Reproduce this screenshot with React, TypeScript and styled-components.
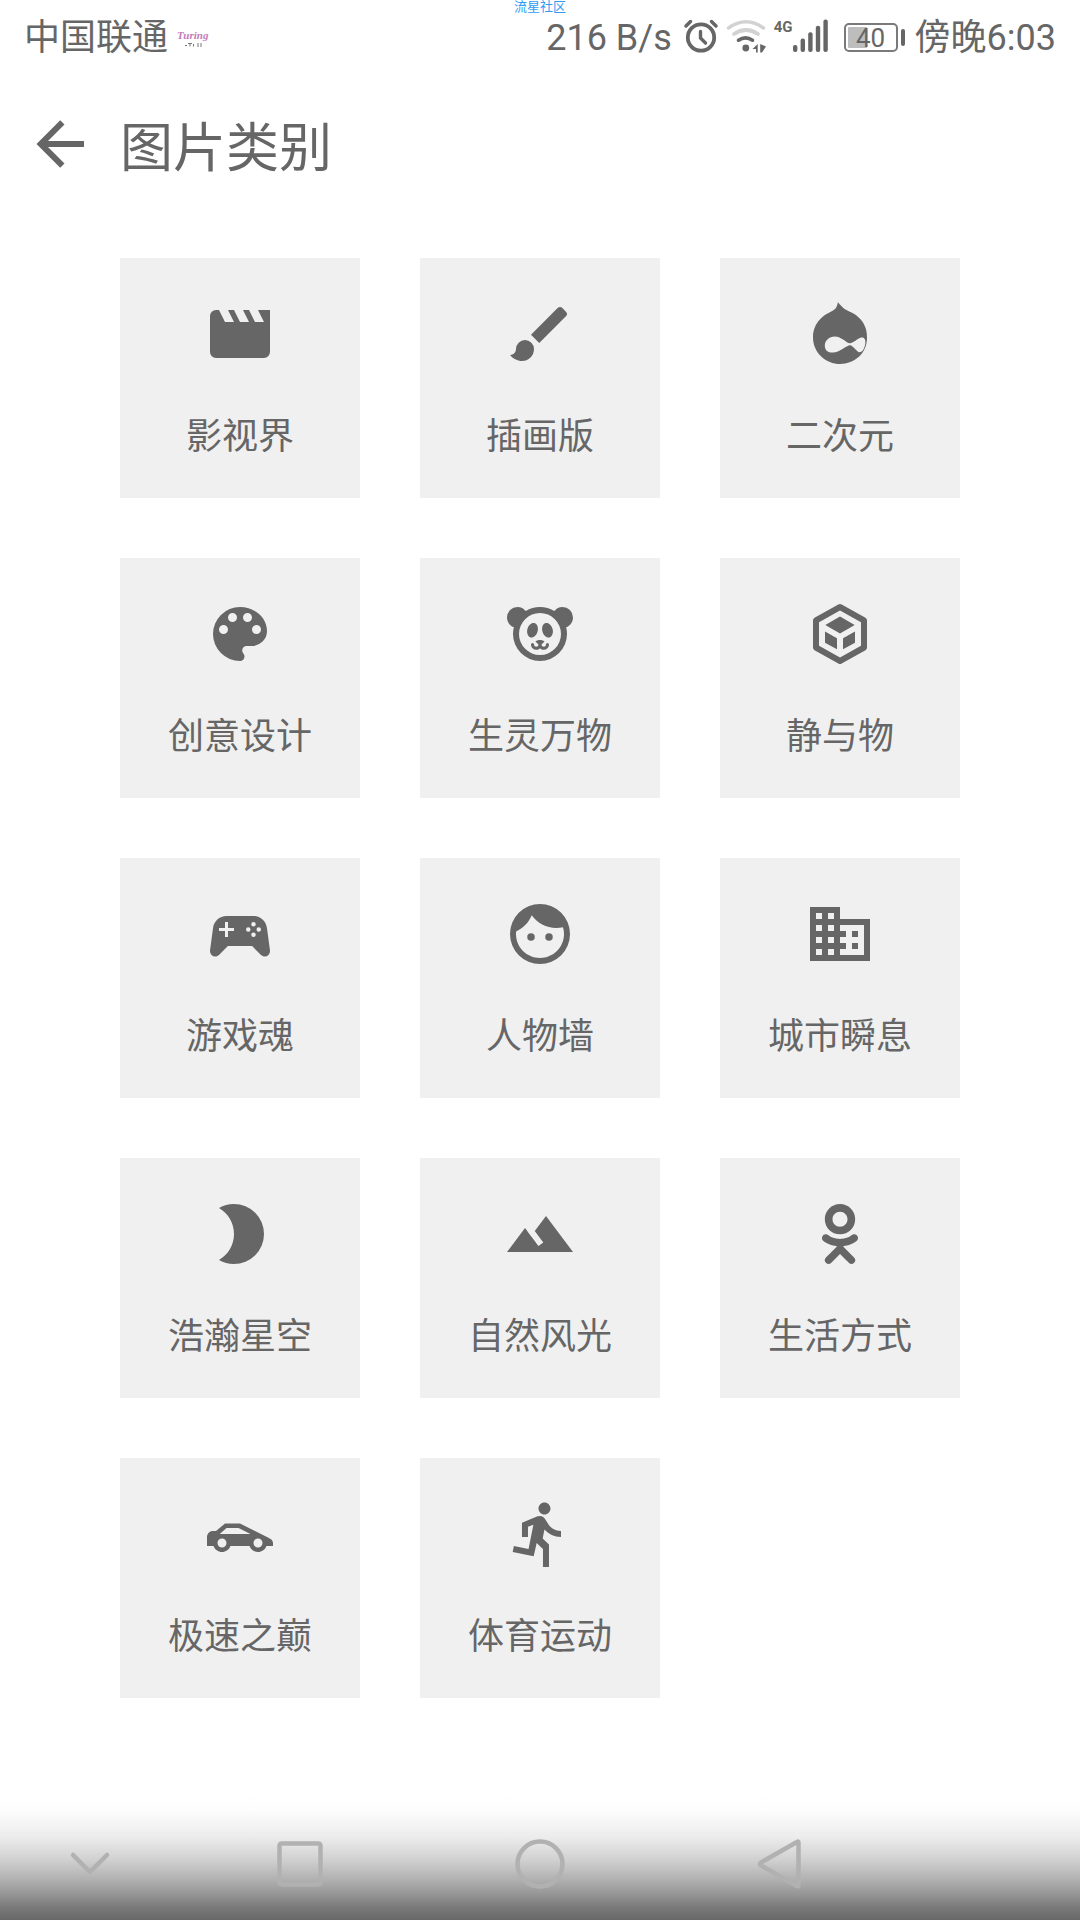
import React from 'react';
import styled, { createGlobalStyle } from 'styled-components';

const ink = '#666666';

const GlobalStyle = createGlobalStyle`
  * { box-sizing: border-box; }
  body {
    margin: 0;
    background: #ffffff;
    color: ${ink};
    font-family: Roboto, 'Noto Sans CJK SC', sans-serif;
  }
`;

const Screen = styled.div`
  display: flex;
  flex-direction: column;
  min-height: 100vh;
`;

const StatusBar = styled.div`
  position: relative;
  display: flex;
  align-items: center;
  justify-content: space-between;
  height: 72px;
  padding: 2px 24px 0;
  font-size: 36px;
  line-height: 48px;
  white-space: nowrap;
`;

const Watermark = styled.span`
  position: absolute;
  top: 0;
  left: 50%;
  transform: translateX(-50%);
  color: #2f9df4;
  font-size: 13px;
  line-height: 13px;
`;

const StatusGroup = styled.div<{ $gap: number }>`
  display: flex;
  align-items: center;
  gap: ${(p) => p.$gap}px;
`;

const StatusText = styled.span<{ $after?: number }>`
  padding-top: 2px;
  margin-right: ${(p) => p.$after ?? 0}px;
`;

const AppMark = styled.span`
  display: flex;
  flex-direction: column;
  align-items: center;
  color: #c47bb8;
  font-family: 'Liberation Serif', serif;
  font-size: 11px;
  font-style: italic;
  font-weight: 700;
  line-height: 16px;
`;

const Network = styled.span`
  display: flex;
  align-items: flex-start;
  height: 36px;
`;

const NetworkType = styled.span`
  font-size: 15px;
  font-weight: 700;
  line-height: 16px;
`;

const Battery = styled.span`
  display: flex;
  align-items: center;
  gap: 3px;
  margin: 0 2px 0 8px;

  &::after {
    content: '';
    width: 4px;
    height: 17px;
    border-radius: 2px;
    background: ${ink};
  }
`;

const BatteryCell = styled.span`
  width: 54px;
  height: 29px;
  padding: 2px;
  border: 2px solid #7a7a7a;
  border-radius: 5px;
  background: linear-gradient(90deg, #bdbdbd 42%, transparent 42%) content-box;
  font-size: 26px;
  line-height: 23px;
  text-align: center;
`;

const Header = styled.header`
  display: flex;
  align-items: center;
  gap: 24px;
  height: 144px;
  padding: 0 24px;
`;

const BackButton = styled.button`
  display: flex;
  padding: 0;
  border: 0;
  background: none;
  color: inherit;
  cursor: pointer;
`;

const Title = styled.h1`
  margin: 0;
  padding-top: 10px;
  font-size: 53px;
  font-weight: 400;
  line-height: 72px;
`;

const Grid = styled.main`
  display: grid;
  grid-template-columns: repeat(3, 1fr);
  gap: 60px;
  padding: 42px 120px 60px;
`;

const Tile = styled.button`
  display: flex;
  flex-direction: column;
  align-items: center;
  gap: 40px;
  aspect-ratio: 1;
  padding: 40px 0 0;
  border: 0;
  background: #f0f0f0;
  color: inherit;
  font: inherit;
  font-size: 36px;
  line-height: 54px;
  cursor: pointer;
`;

const Glyph = styled.svg`
  display: block;
  flex: none;
  width: 72px;
  height: 72px;
  fill: currentColor;
  fill-rule: evenodd;
`;

const NavBar = styled.nav`
  display: grid;
  grid-template-columns: 3fr 4fr 4fr 4fr 3fr;
  align-items: center;
  justify-items: center;
  height: 130px;
  margin-top: auto;
  padding-top: 18px;
  background: linear-gradient(
    #ffffff 0,
    #fdfdfd 20px,
    #ececec 47px,
    #d0d0d0 70px,
    #b0b0b0 90px,
    #949494 105px,
    #7a7a7a 117px,
    #686868 130px
  );
`;

const NavButton = styled.button`
  display: flex;
  padding: 0;
  border: 0;
  background: none;
  cursor: pointer;
`;

const NavGlyph = styled.svg`
  width: 60px;
  height: 60px;
  fill: none;
  stroke: #b1b1b1;
  stroke-width: 4.5;
  stroke-linecap: round;
  stroke-linejoin: round;
`;

const dot = (cx: number, cy: number, r: number) =>
  `M${cx - r},${cy}a${r},${r} 0 1,0 ${2 * r},0a${r},${r} 0 1,0 ${-2 * r},0Z`;

const categories = [
  {
    label: '影视界',
    path: 'M18,4L20,8H17L15,4H13L15,8H12L10,4H8L10,8H7L5,4H4A2,2 0 0,0 2,6V18A2,2 0 0,0 4,20H20A2,2 0 0,0 22,18V4H18Z',
  },
  {
    label: '插画版',
    path: 'M20.71,4.63L19.37,3.29C19,2.9 18.35,2.9 17.96,3.29L9,12.25L11.75,15L20.71,6.04C21.1,5.65 21.1,5 20.71,4.63M7,14A3,3 0 0,0 4,17C4,18.31 2.84,19 2,19C2.92,20.22 4.5,21 6,21A4,4 0 0,0 10,17A3,3 0 0,0 7,14Z',
  },
  {
    label: '二次元',
    path: 'M20.47,14.65C20.47,15.29 20.25,16.36 19.83,17.1C19.4,17.85 19.08,18.06 18.44,18.06C17.7,17.95 16.31,15.82 15.36,15.72C14.18,15.72 11.73,18.17 9.71,18.17C8.54,18.17 8.11,17.95 7.79,17.74C7.15,17.31 6.94,16.67 6.94,15.82C6.94,14.22 8.43,12.84 10.24,12.84C12.59,12.84 14.18,15.18 15.36,15.08C16.31,15.08 18.23,13.16 19.19,13.16C20.15,12.95 20.47,14 20.47,14.65M16.63,5.28C15.57,4.64 14.61,4.32 13.54,3.68C12.9,3.25 12.05,2.3 11.31,1.44C11,2.83 10.78,3.36 10.24,3.79C9.18,4.53 8.64,4.85 7.69,5.28C6.94,5.7 3,8.05 3,13.16C3,18.27 7.37,22 12.05,22C16.85,22 21,18.5 21,13.27C21.21,8.05 17.27,5.7 16.63,5.28Z',
  },
  {
    label: '创意设计',
    path:
      'M12,3A9,9 0 0,0 3,12A9,9 0 0,0 12,21A1.5,1.5 0 0,0 13.5,19.5C13.5,19.11 13.35,18.76 13.11,18.5C12.88,18.23 12.73,17.88 12.73,17.5A1.5,1.5 0 0,1 14.23,16H16A5,5 0 0,0 21,11C21,6.58 16.97,3 12,3Z' +
      dot(17.5, 10.5, 1.5) + dot(14.5, 6.5, 1.5) + dot(9.5, 6.5, 1.5) + dot(6.5, 10.5, 1.5),
  },
  {
    label: '生灵万物',
    path: 'M12,3C13.74,3 15.36,3.5 16.74,4.35C17.38,3.53 18.38,3 19.5,3A3.5,3.5 0 0,1 23,6.5C23,8 22.05,9.28 20.72,9.78C20.9,10.5 21,11.23 21,12A9,9 0 0,1 12,21A9,9 0 0,1 3,12C3,11.23 3.1,10.5 3.28,9.78C1.95,9.28 1,8 1,6.5A3.5,3.5 0 0,1 4.5,3C5.62,3 6.62,3.53 7.26,4.35C8.64,3.5 10.26,3 12,3M12,5A7,7 0 0,0 5,12A7,7 0 0,0 12,19A7,7 0 0,0 19,12A7,7 0 0,0 12,5M16.19,10.3C16.55,11.63 16.08,12.91 15.15,13.16C14.21,13.42 13.17,12.54 12.81,11.2C12.45,9.87 12.92,8.59 13.85,8.34C14.79,8.09 15.83,8.96 16.19,10.3M7.81,10.3C8.17,8.96 9.21,8.09 10.15,8.34C11.08,8.59 11.55,9.87 11.19,11.2C10.83,12.54 9.79,13.42 8.85,13.16C7.92,12.91 7.45,11.63 7.81,10.3M12,14C12.6,14 13.13,14.19 13.5,14.5L12.5,15.5C12.5,15.92 12.84,16.25 13.25,16.25A0.75,0.75 0 0,0 14,15.5A0.5,0.5 0 0,1 14.5,15A0.5,0.5 0 0,1 15,15.5A1.75,1.75 0 0,1 13.25,17.25C12.76,17.25 12.32,17.05 12,16.72C11.68,17.05 11.24,17.25 10.75,17.25A1.75,1.75 0 0,1 9,15.5A0.5,0.5 0 0,1 9.5,15A0.5,0.5 0 0,1 10,15.5A0.75,0.75 0 0,0 10.75,16.25A0.75,0.75 0 0,0 11.5,15.5L10.5,14.5C10.87,14.19 11.4,14 12,14Z',
  },
  {
    label: '静与物',
    path: 'M11.43,2.18Q12,1.8 12.57,2.18L20.5,6.6Q21,6.9 21,7.5V16.5Q21,17.1 20.5,17.4L12.57,21.82Q12,22.2 11.43,21.82L3.5,17.4Q3,17.1 3,16.5V7.5Q3,6.9 3.5,6.6ZM12,4.2L5,8.1V15.9L12,19.8L19,15.9V8.1ZM12,6.2L16.9,9L12,11.8L7.1,9ZM7,11.2L11,13.4V17.1L7,14.9ZM17,11.2V14.9L13,17.1V13.4Z',
  },
  {
    label: '游戏魂',
    path:
      'M7.97,16L5,19C4.67,19.3 4.23,19.5 3.75,19.5A1.75,1.75 0 0,1 2,17.75V17.5L3,10.12C3.21,7.81 5.14,6 7.5,6H16.5C18.86,6 20.79,7.81 21,10.12L22,17.5V17.75A1.75,1.75 0 0,1 20.25,19.5C19.77,19.5 19.33,19.3 19,19L16.03,16H7.97M7,8V10H5V11H7V13H8V11H10V10H8V8H7Z' +
      dot(16.5, 8.75, 0.75) + dot(14.75, 10.5, 0.75) + dot(18.25, 10.5, 0.75) + dot(16.5, 12.25, 0.75),
  },
  {
    label: '人物墙',
    path:
      'M12,2A10,10 0 0,0 2,12A10,10 0 0,0 12,22A10,10 0 0,0 22,12A10,10 0 0,0 12,2M12,20C7.59,20 4,16.41 4,12C4,11.71 4,11.42 4.05,11.14C6.41,10.09 8.28,8.16 9.26,5.77C11.07,8.33 14.05,10 17.42,10C18.2,10 18.95,9.91 19.67,9.74C19.88,10.45 20,11.21 20,12C20,16.41 16.41,20 12,20Z' +
      dot(9, 13, 1.25) + dot(15, 13, 1.25),
  },
  {
    label: '城市瞬息',
    path: 'M18,15H16V17H18M18,11H16V13H18M20,19H12V17H14V15H12V13H14V11H12V9H20M10,7H8V5H10M10,11H8V9H10M10,15H8V13H10M10,19H8V17H10M6,7H4V5H6M6,11H4V9H6M6,15H4V13H6M6,19H4V17H6M12,7V3H2V21H22V7H12Z',
  },
  {
    label: '浩瀚星空',
    path: 'M10,2C8.18,2 6.47,2.5 5,3.35C8,5.08 10,8.3 10,12C10,15.7 8,18.92 5,20.65C6.47,21.5 8.18,22 10,22A10,10 0 0,0 20,12A10,10 0 0,0 10,2Z',
  },
  {
    label: '自然风光',
    path: 'M14,6L10.25,11L13.1,14.8L11.5,16C9.81,13.75 7,10 7,10L1,18H23L14,6Z',
  },
  {
    label: '生活方式',
    path: 'M17.83,12.74C17.55,12.17 16.76,11.69 15.71,12.5C14.28,13.64 12,13.64 12,13.64C12,13.64 9.72,13.64 8.29,12.5C7.24,11.69 6.45,12.17 6.17,12.74C5.67,13.74 6.23,14.23 7.5,15.04C8.59,15.74 10.08,16 11.04,16.1L10.24,16.9C9.1,18.03 8,19.12 7.25,19.88C6.8,20.34 6.8,21.07 7.25,21.5L7.39,21.66C7.84,22.11 8.58,22.11 9.03,21.66L12,18.68C13.15,19.81 14.24,20.9 15,21.66C15.45,22.11 16.18,22.11 16.64,21.66L16.77,21.5C17.23,21.07 17.23,20.34 16.77,19.88L13.79,16.9L13,16.09C13.95,16 15.42,15.73 16.5,15.04C17.77,14.23 18.33,13.74 17.83,12.74M12,4.57C13.38,4.57 14.5,5.69 14.5,7.06C14.5,8.44 13.38,9.55 12,9.55C10.62,9.55 9.5,8.44 9.5,7.06C9.5,5.69 10.62,4.57 12,4.57M12,12.12C14.8,12.12 17.06,9.86 17.06,7.06C17.06,4.27 14.8,2 12,2C9.2,2 6.94,4.27 6.94,7.06C6.94,9.86 9.2,12.12 12,12.12Z',
  },
  {
    label: '极速之巅',
    path:
      'M12,8.5H7L4,11H3C1.89,11 1,11.89 1,13V16H3.17C3.6,17.2 4.73,18 6,18C7.27,18 8.4,17.2 8.82,16H15.17C15.6,17.2 16.73,18 18,18C19.27,18 20.4,17.2 20.82,16H23V15C23,13.89 21.97,13.53 21,13L12,8.5M5.25,12L7.5,10H11.5L15.5,12H5.25Z' +
      dot(6, 15, 1.5) + dot(18, 15, 1.5),
  },
  {
    label: '体育运动',
    path: 'M13.49,5.48C14.59,5.48 15.49,4.58 15.49,3.48C15.49,2.38 14.59,1.48 13.49,1.48C12.39,1.48 11.49,2.38 11.49,3.48C11.49,4.58 12.39,5.48 13.49,5.48M9.89,19.38L10.89,14.98L12.99,16.98V22.98H14.99V15.48L12.89,13.48L13.49,10.48C14.79,11.98 16.79,12.98 18.99,12.98V10.98C17.09,10.98 15.49,9.98 14.69,8.58L13.69,6.98C13.29,6.38 12.69,5.98 11.99,5.98C11.69,5.98 11.49,6.08 11.19,6.08L5.99,8.28V12.98H7.99V9.58L9.79,8.88L8.19,16.98L3.29,15.98L2.89,17.98L9.89,19.38Z',
  },
];

const AlarmIcon = () => (
  <svg width="34" height="36" viewBox="0 0 34 36" fill="none" stroke={ink} strokeLinecap="round">
    <circle cx="17" cy="18.5" r="13.2" strokeWidth="3.8" />
    <path d="M16.5 12.5v6.5l5 5" strokeWidth="3.4" strokeLinejoin="round" />
    <path d="M2 7l4.500-4.500M27.500 2.500L32 7" strokeWidth="3.4" />
  </svg>
);

const WifiIcon = () => (
  <svg width="40" height="36" viewBox="0 0 40 36" fill="none" strokeLinecap="round">
    <path d="M2.500 9Q20-3.500 37.500 9" stroke="#d2d2d2" strokeWidth="3.4" />
    <path d="M8 15Q20 7 32 15" stroke="#d2d2d2" strokeWidth="3.8" />
    <path d="M12.500 21.200Q19.500 16.500 26.500 21.200" stroke={ink} strokeWidth="3.6" />
    <circle cx="19.800" cy="29" r="3.400" fill={ink} />
    <path d="M26.500 30l5.200-5v8.500h-1.700V30zM34.200 25l5.800 2.500-4 6h-1.800z" fill={ink} />
  </svg>
);

const SignalIcon = () => (
  <svg width="35" height="36" viewBox="0 0 35 36" fill={ink}>
    {[0, 1, 2, 3, 4].map((i) => (
      <rect key={i} x={i * 7.6} y={26 - i * 6.4} width="4.4" height={7 + i * 6.4} rx="2" />
    ))}
  </svg>
);

export default function App() {
  return (
    <Screen>
      <GlobalStyle />
      <StatusBar>
        <Watermark>流星社区</Watermark>
        <StatusGroup $gap={9}>
          <StatusText>中国联通</StatusText>
          <AppMark>
            Turing
            <svg width="18" height="4" viewBox="0 0 18 4" stroke="#777" strokeWidth="1">
              <path d="M1 2.500h2M4 .500h4M6 1v2.500M9.500 1v2.500M13 1h2M16 1h2M13 3h2M16 3h2" />
            </svg>
          </AppMark>
        </StatusGroup>
        <StatusGroup $gap={8}>
          <StatusText $after={4}>216 B/s</StatusText>
          <AlarmIcon />
          <WifiIcon />
          <Network>
            <NetworkType>4G</NetworkType>
            <SignalIcon />
          </Network>
          <Battery>
            <BatteryCell>40</BatteryCell>
          </Battery>
          <StatusText>傍晚6:03</StatusText>
        </StatusGroup>
      </StatusBar>
      <Header>
        <BackButton type="button" aria-label="返回">
          <Glyph viewBox="0 0 24 24">
            <path d="M20,11V13H8L13.5,18.5L12.08,19.92L4.16,12L12.08,4.08L13.5,5.5L8,11H20Z" />
          </Glyph>
        </BackButton>
        <Title>图片类别</Title>
      </Header>
      <Grid>
        {categories.map(({ label, path }) => (
          <Tile key={label} type="button">
            <Glyph viewBox="0 0 24 24" aria-hidden="true">
              <path d={path} />
            </Glyph>
            {label}
          </Tile>
        ))}
      </Grid>
      <NavBar>
        <NavButton type="button" aria-label="收起">
          <NavGlyph viewBox="0 0 60 60">
            <path d="M13 21l17 17 17-17" />
          </NavGlyph>
        </NavButton>
        <NavButton type="button" aria-label="最近任务">
          <NavGlyph viewBox="0 0 60 60">
            <rect x="9.500" y="9.500" width="41" height="41" rx="2" />
          </NavGlyph>
        </NavButton>
        <NavButton type="button" aria-label="主页">
          <NavGlyph viewBox="0 0 60 60">
            <circle cx="30" cy="30" r="22.500" />
          </NavGlyph>
        </NavButton>
        <NavButton type="button" aria-label="后退">
          <NavGlyph viewBox="0 0 60 60">
            <path d="M48.500 8.500Q48.500 7 47 8L11 28.500Q9 30 11 31.500L47 52Q48.500 53 48.500 51.500Z" />
          </NavGlyph>
        </NavButton>
      </NavBar>
    </Screen>
  );
}
